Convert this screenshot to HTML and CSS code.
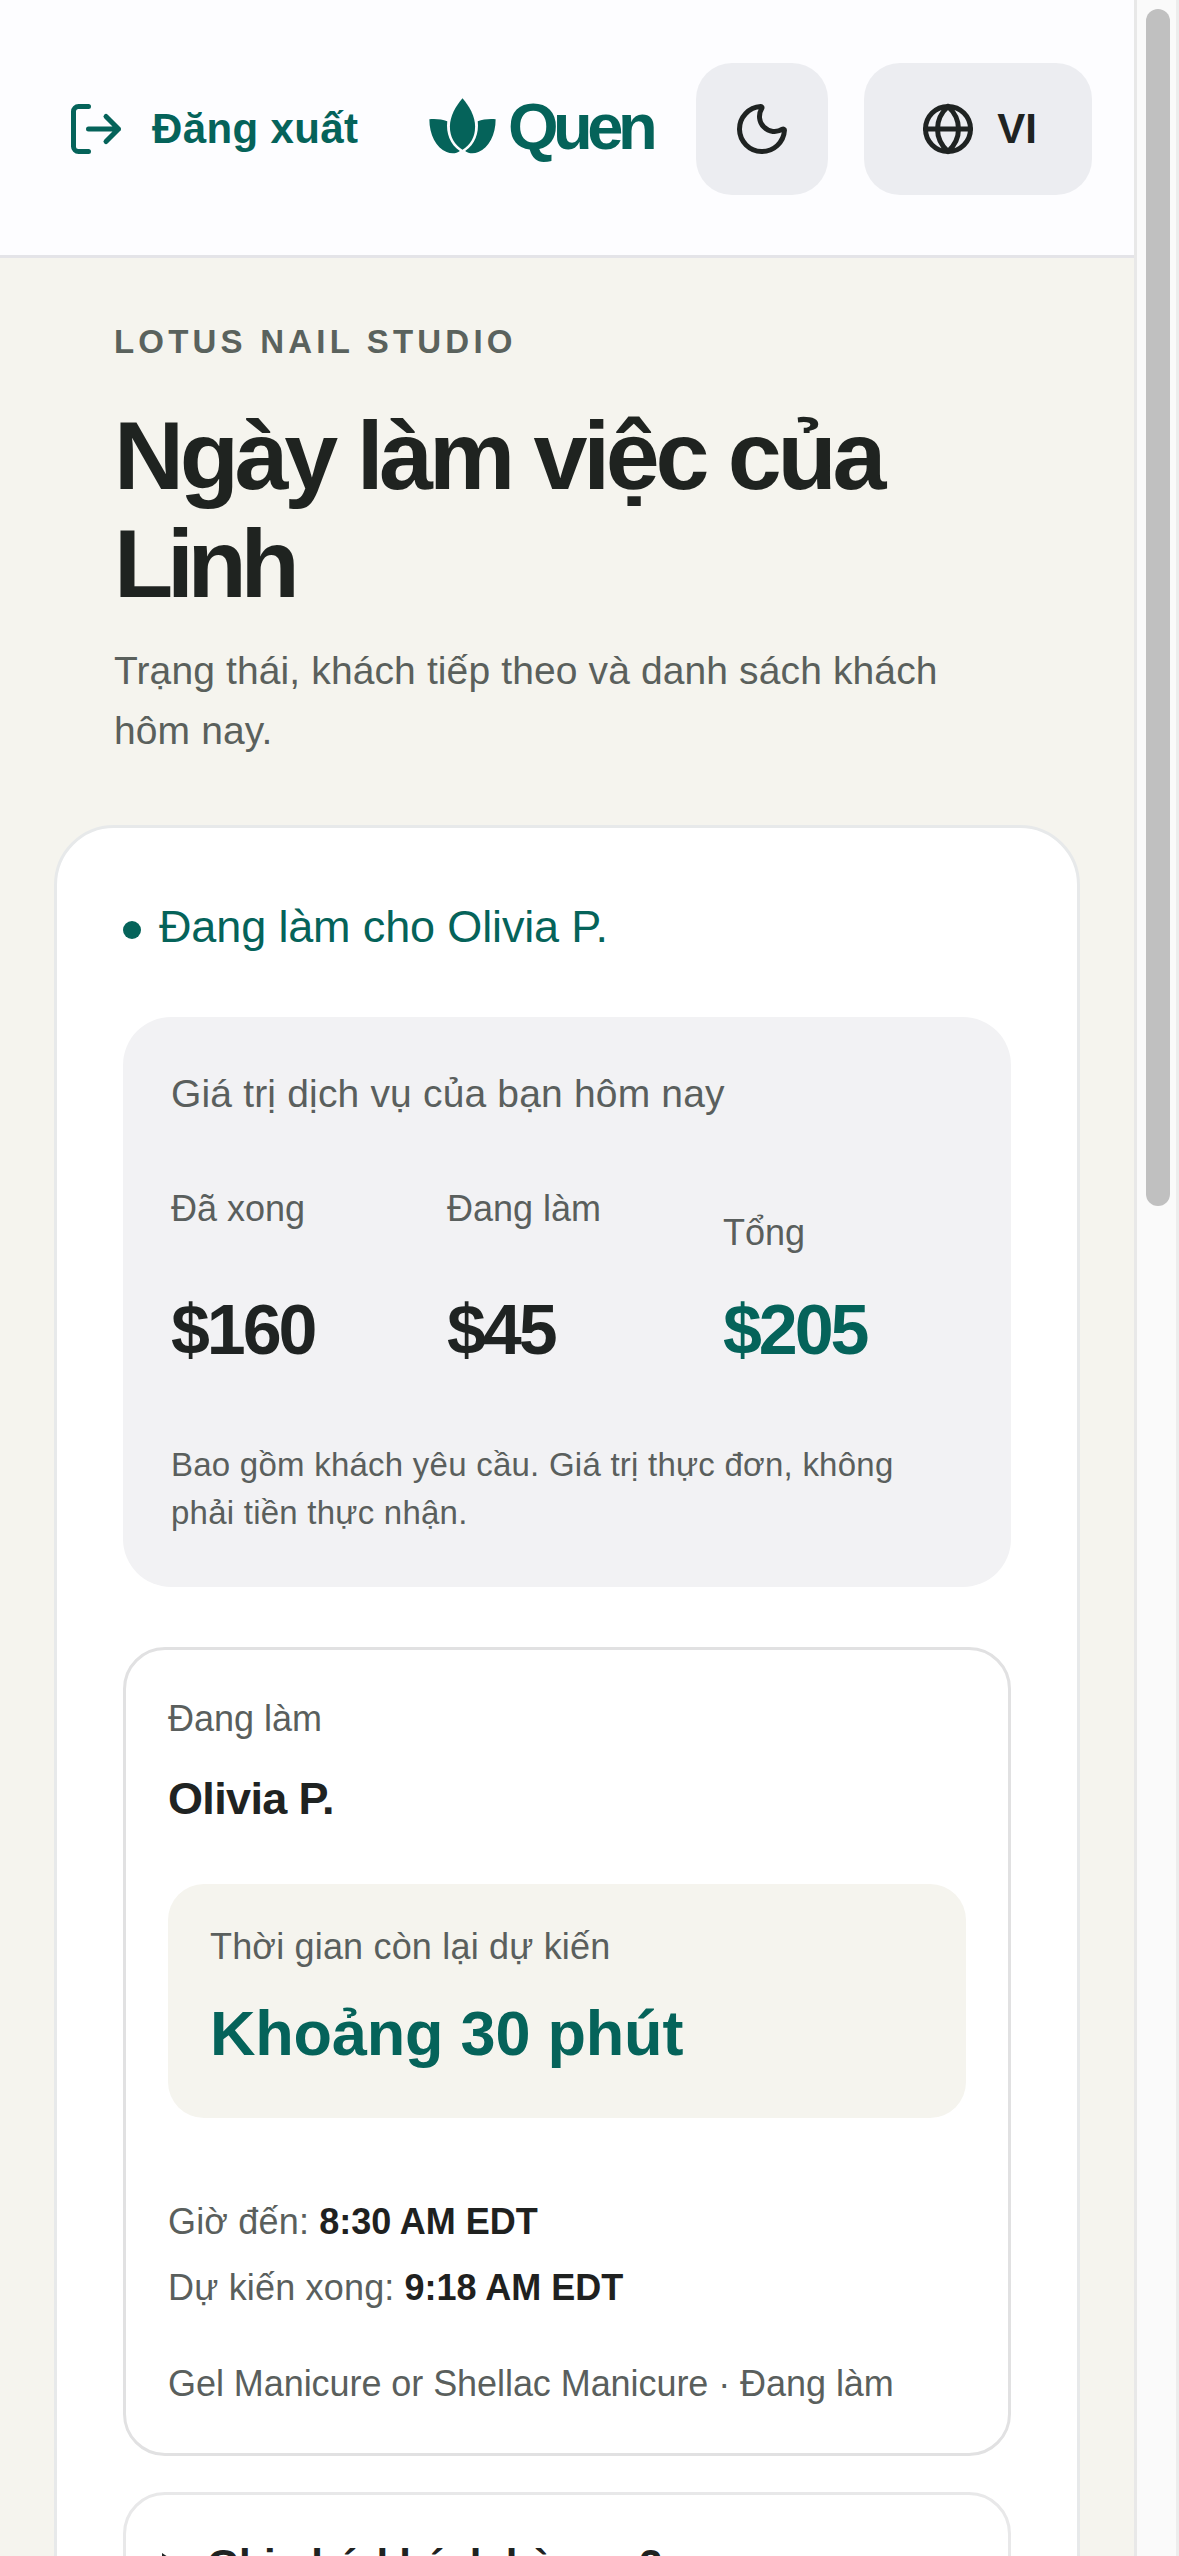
FILE: index.html
```html
<!DOCTYPE html>
<html lang="vi">
<head>
<meta charset="utf-8">
<title>Quen</title>
<link rel="stylesheet" href="styles.css">
</head>
<body>
<div class="page">
  <header class="topbar">
    <a class="logout">
      <svg class="icon" viewBox="0 0 24 24"><path d="M9 3H5a2 2 0 0 0-2 2v14a2 2 0 0 0 2 2h4M16 17l5-5-5-5M21 12H9"/></svg>
      <span>Đăng xuất</span>
    </a>
    <div class="brand">
      <svg class="lotus" viewBox="29 39 202 169">
        <path d="M130 40C150 64 168 92 168 126C168 156 154 182 130 195C106 182 92 156 92 126C92 92 110 64 130 40Z"/>
        <path d="M30 103C48 101 68 103 84 109C80 145 92 178 122 199C112 207 96 208 82 202C50 188 30 150 30 103Z"/>
        <path d="M230 103C212 101 192 103 176 109C180 145 168 178 138 199C148 207 164 208 178 202C210 188 230 150 230 103Z"/>
      </svg>
      <span class="wordmark">Quen</span>
    </div>
    <div class="actions">
      <button class="tool tool-theme">
        <svg class="icon" viewBox="0 0 24 24"><path d="M20.985 12.486a9 9 0 1 1-9.473-9.472c.405-.022.617.46.402.803a6 6 0 0 0 8.268 8.268c.344-.215.825-.004.803.401"/></svg>
      </button>
      <button class="tool tool-lang">
        <svg class="icon" viewBox="0 0 24 24"><circle cx="12" cy="12" r="9"/><path d="M3 12h18M12 3c-5.6 5-5.6 13 0 18M12 3c5.6 5 5.6 13 0 18"/></svg>
        <span>VI</span>
      </button>
    </div>
  </header>

  <main class="content">
    <section class="hero">
      <p class="eyebrow">LOTUS NAIL STUDIO</p>
      <h1 class="title">Ngày làm việc của <span class="title-name">Linh</span></h1>
      <p class="lead">Trạng thái, khách tiếp theo và danh sách khách hôm nay.</p>
    </section>

    <section class="card">
      <p class="status"><span class="dot"></span>Đang làm cho Olivia P.</p>

      <div class="stats">
        <p class="stats-title">Giá trị dịch vụ của bạn hôm nay</p>
        <div class="stats-grid">
          <div class="stat"><span class="label">Đã xong</span><strong class="value">$160</strong></div>
          <div class="stat"><span class="label">Đang làm</span><strong class="value">$45</strong></div>
          <div class="stat stat-total"><span class="label">Tổng</span><strong class="value">$205</strong></div>
        </div>
        <p class="stats-note">Bao gồm khách yêu cầu. Giá trị thực đơn, không phải tiền thực nhận.</p>
      </div>

      <article class="visit">
        <p class="label">Đang làm</p>
        <h2 class="client">Olivia P.</h2>
        <div class="remaining">
          <p class="label label-wide">Thời gian còn lại dự kiến</p>
          <p class="remaining-time">Khoảng 30 phút</p>
        </div>
        <div class="times">
          <p class="label"><span class="label-wide">Giờ đến:</span> <strong>8:30 AM EDT</strong></p>
          <p class="label"><span class="label-wide">Dự kiến xong:</span> <strong>9:18 AM EDT</strong></p>
        </div>
        <p class="label label-tight">Gel Manicure or Shellac Manicure · Đang làm</p>
      </article>

      <div class="notes">
        <svg class="marker" viewBox="0 0 18 24"><path d="M0 0L18 12L0 24Z"/></svg>
        <span>Ghi nhớ khách hàng · 2</span>
      </div>
    </section>
  </main>
</div>
<div class="scrollbar"><div class="thumb"></div></div>
</body>
</html>
```
FILE: styles.css
```css
* { box-sizing: border-box; }

body {
  margin: 0;
  display: flex;
  width: 1179px;
  height: 2556px;
  overflow: hidden;
  font-family: "Liberation Sans", Arial, sans-serif;
  color: #1f2322;
  background: #f5f4ee;
}

p, h1, h2 { margin: 0; }

.page { width: 1134px; height: 2556px; overflow: hidden; }

/* Top bar */
.topbar {
  display: flex;
  align-items: center;
  height: 258px;
  padding: 3px 42px 0 66px;
  background: #fdfdff;
  border-bottom: 3px solid #e4e4e8;
}
.icon {
  width: 60px;
  height: 60px;
  flex: none;
  fill: none;
  stroke: currentColor;
  stroke-width: 2;
  stroke-linecap: round;
  stroke-linejoin: round;
}
.logout {
  display: flex;
  align-items: center;
  gap: 26px;
  width: 363px;
  font-size: 42px;
  font-weight: 700;
  letter-spacing: 0.38px;
  color: #05635a;
}
.brand { display: flex; align-items: center; gap: 12px; color: #05635a; }
.lotus { width: 67px; height: 56px; margin-top: -6px; fill: currentColor; }
.wordmark { margin-top: -4px; font-size: 65px; font-weight: 700; letter-spacing: -5.5px; line-height: 72px; }
.actions { display: flex; gap: 36px; margin-left: auto; }
.tool {
  display: flex;
  align-items: center;
  justify-content: center;
  height: 132px;
  padding: 0;
  border: 0;
  border-radius: 36px;
  background: #ecedf1;
  color: #1f2322;
  font: 700 42px "Liberation Sans", Arial, sans-serif;
}
.tool-theme { width: 132px; }
.tool-lang { width: 228px; gap: 19px; padding-right: 1px; }

/* Page heading */
.hero { padding: 60px 114px 64px; }
.eyebrow {
  font-size: 33px;
  font-weight: 700;
  line-height: 48px;
  letter-spacing: 4.2px;
  color: #5a625d;
}
.title {
  margin-top: 36px;
  font-size: 97px;
  font-weight: 700;
  line-height: 108px;
  letter-spacing: -4.3px;
  color: #1f2320;
}
.title-name { letter-spacing: -6.3px; }
.lead {
  margin-top: 23px;
  font-size: 39px;
  line-height: 60px;
  letter-spacing: 0.12px;
  color: #5a605c;
}

/* Main card */
.card {
  height: 1900px;
  margin: 0 54px;
  padding: 69px 66px;
  background: #fff;
  border: 3px solid #e7e9ea;
  border-radius: 60px;
}
.status {
  display: flex;
  align-items: center;
  gap: 18px;
  font-size: 45px;
  line-height: 60px;
  letter-spacing: -0.14px;
  color: #05635a;
}
.dot { width: 18px; height: 18px; margin-top: 6px; border-radius: 50%; background: #05635a; }

.label { font-size: 36px; line-height: 48px; color: #5a5f5d; }
.label-wide { letter-spacing: 0.18px; }
.label-tight { letter-spacing: -0.06px; }
.label strong { color: #1f2120; }

/* Service value summary */
.stats {
  margin-top: 60px;
  padding: 50px 48px 50px;
  border-radius: 48px;
  background: #f2f2f4;
}
.stats-title { font-size: 39px; line-height: 54px; letter-spacing: 0.17px; color: #5a5f5d; }
.stats-grid {
  display: grid;
  grid-template-columns: repeat(3, 1fr);
  gap: 36px;
  height: 181px;
  margin-top: 64px;
}
.stat { display: flex; flex-direction: column; justify-content: space-between; }
.stat-total { padding-top: 24px; }
.value { font-size: 70px; line-height: 72px; letter-spacing: -3.1px; }
.stat-total .value { color: #05635a; }
.stats-note {
  margin-top: 75px;
  font-size: 33px;
  line-height: 48px;
  letter-spacing: 0.24px;
  color: #5a5f5d;
}

/* Current visit */
.visit {
  margin-top: 60px;
  padding: 45px 42px;
  border: 3px solid #e1e1e2;
  border-radius: 42px;
}
.client { margin-top: 26px; font-size: 45px; line-height: 60px; letter-spacing: -0.66px; }
.remaining {
  margin-top: 55px;
  padding: 39px 42px 45px;
  border-radius: 36px;
  background: #f5f4ee;
}
.remaining-time {
  margin-top: 23px;
  margin-bottom: 1px;
  font-size: 63px;
  font-weight: 700;
  line-height: 78px;
  letter-spacing: -0.2px;
  color: #05635a;
}
.times { display: grid; gap: 18px; margin: 80px 0 48px; }

/* Customer notes disclosure */
.notes {
  display: flex;
  align-items: center;
  gap: 27px;
  height: 146px;
  margin-top: 36px;
  padding: 0 36px;
  border: 3px solid #e8e8e9;
  border-radius: 42px;
  font-size: 42px;
  font-weight: 700;
  line-height: 60px;
  letter-spacing: -0.63px;
}
.marker { width: 18px; height: 24px; fill: currentColor; }

/* Scroll track */
.scrollbar {
  width: 45px;
  height: 2556px;
  padding: 9px 0 0 9px;
  background: #fafafa;
  border-left: 3px solid #e8e8e8;
  border-right: 3px solid #ededed;
}
.thumb { width: 24px; height: 1197px; border-radius: 12px; background: #c0c0c0; }
```
